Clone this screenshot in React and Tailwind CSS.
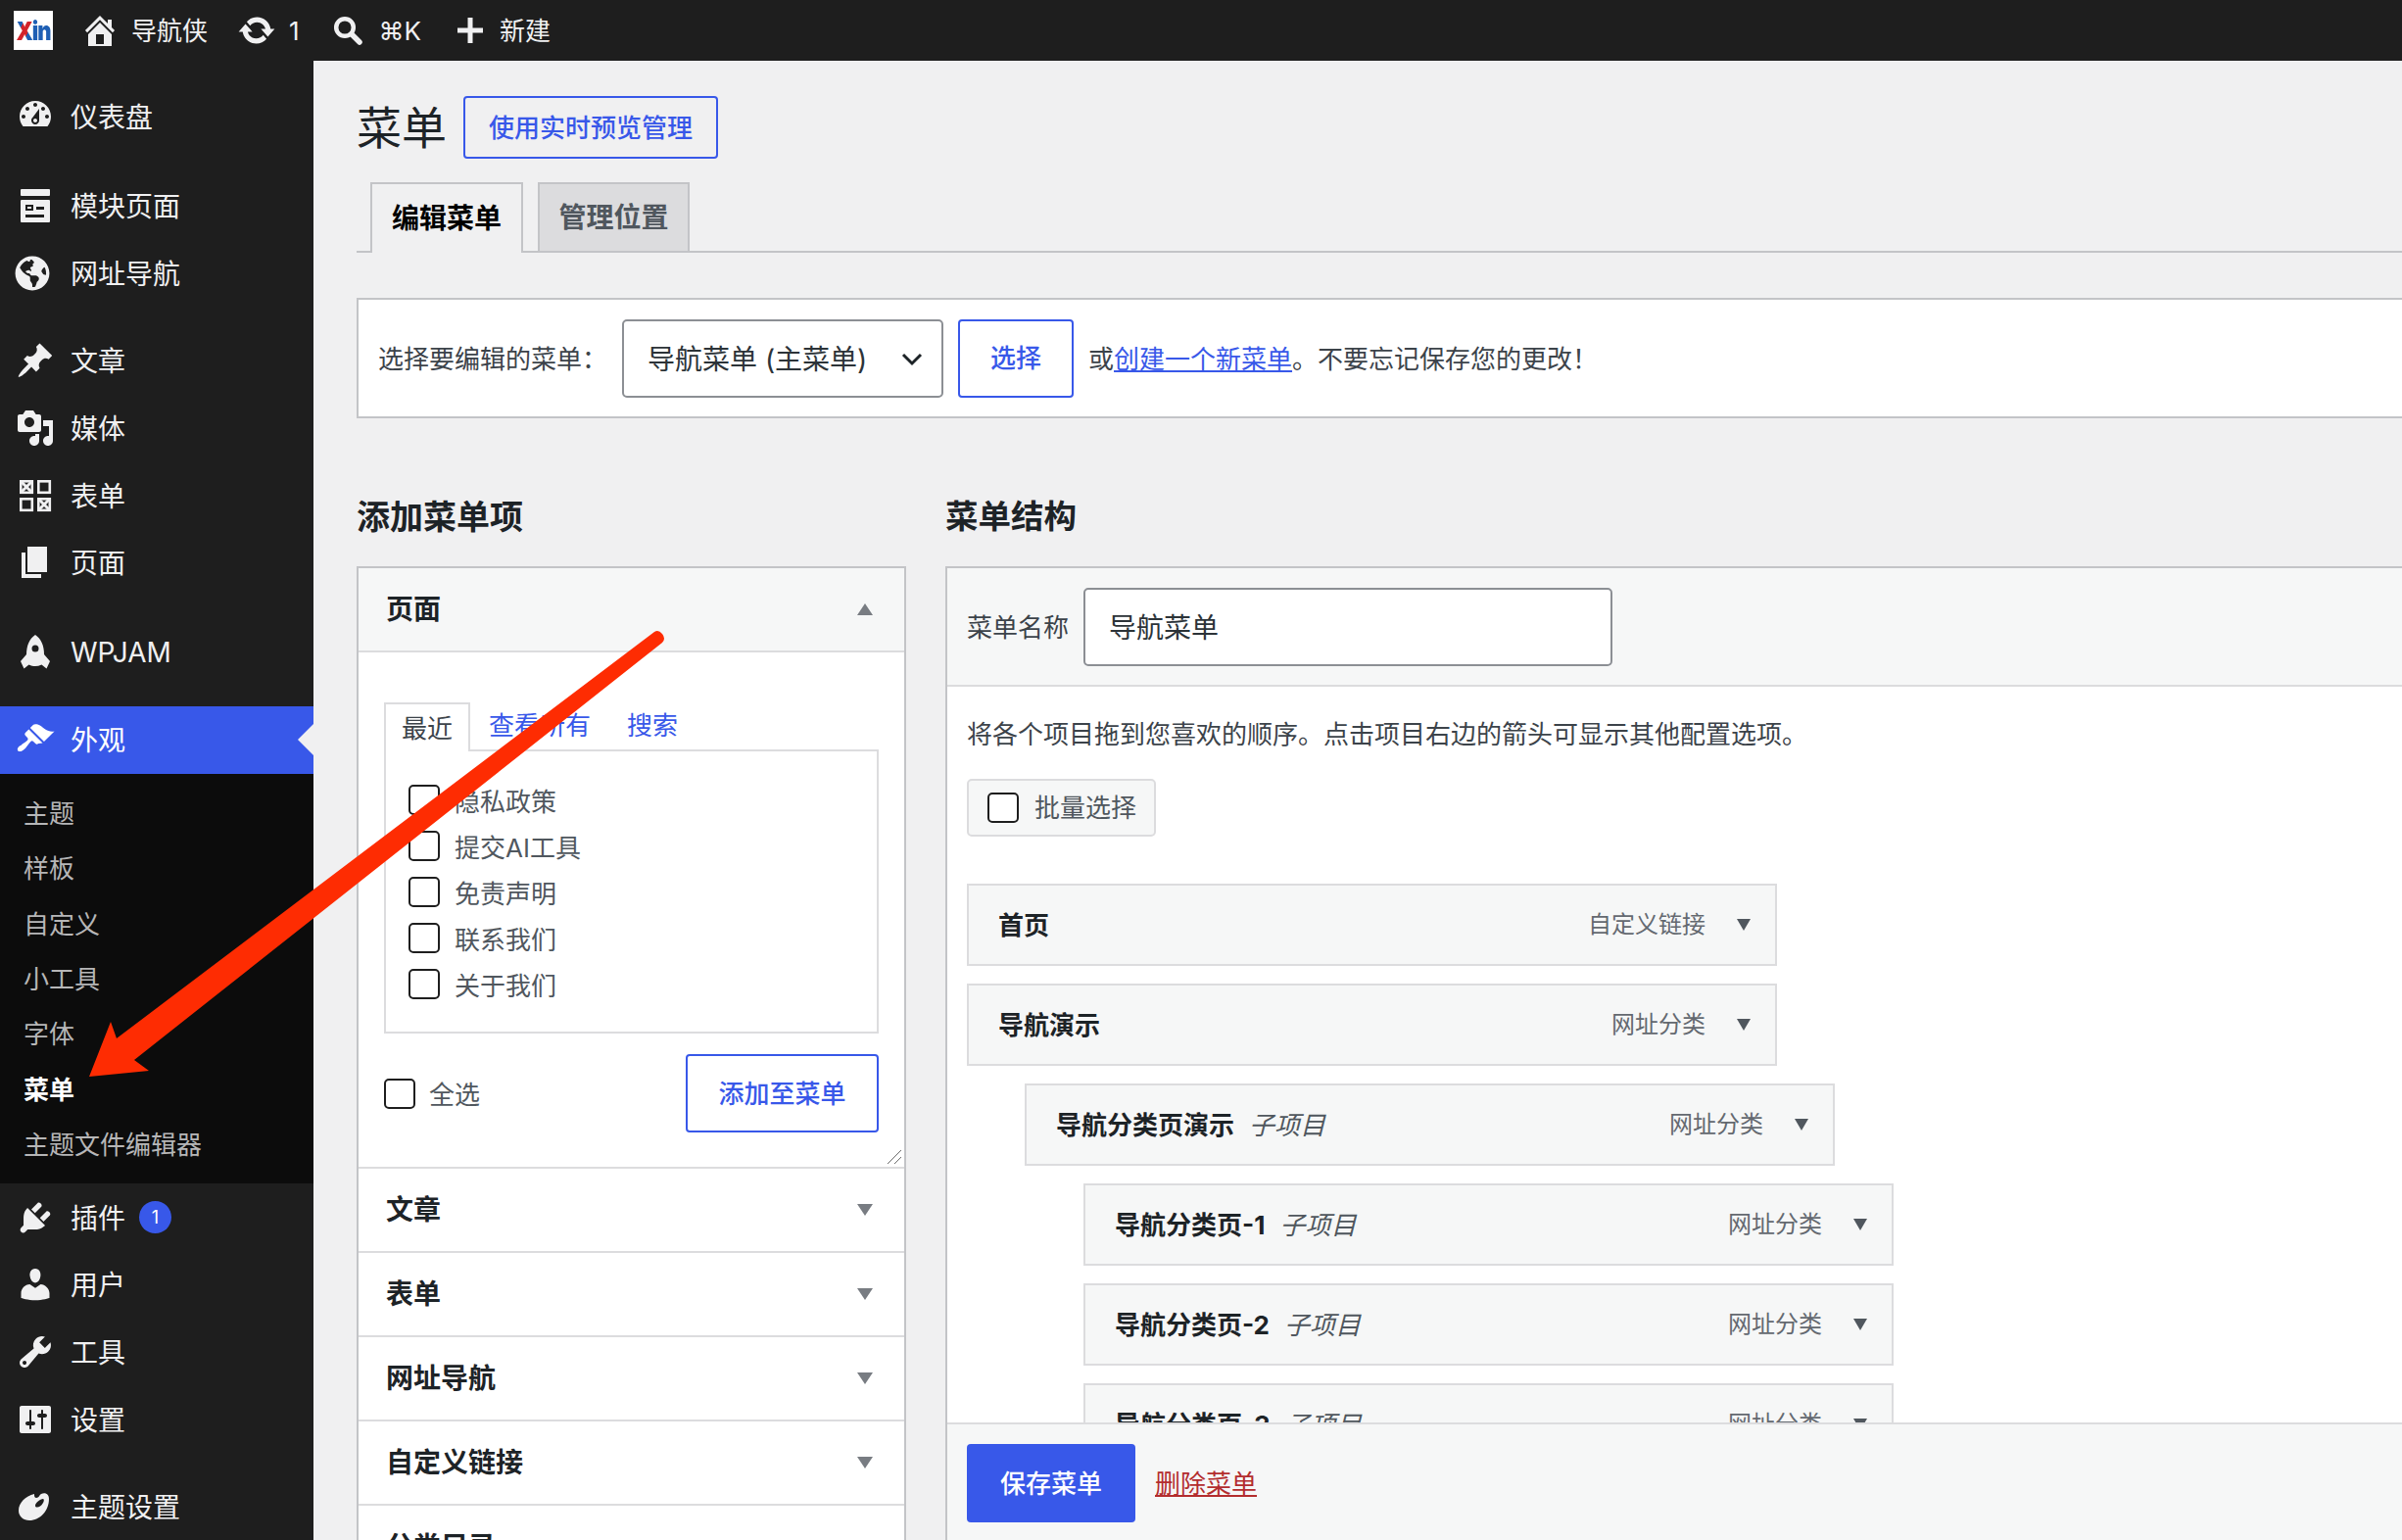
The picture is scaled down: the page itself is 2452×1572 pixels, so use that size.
import React from 'react';
import { FaGlobeAmericas } from 'react-icons/fa';

const P = {
  dashboard: 'M3.76 16h12.48c1.1-1.37 1.76-3.11 1.76-5 0-4.42-3.58-8-8-8s-8 3.58-8 8c0 1.89.66 3.63 1.76 5zM10 4c.55 0 1 .45 1 1s-.45 1-1 1-1-.45-1-1 .45-1 1-1zM6 6c.55 0 1 .45 1 1s-.45 1-1 1-1-.45-1-1 .45-1 1-1zm8 0c.55 0 1 .45 1 1s-.45 1-1 1-1-.45-1-1 .45-1 1-1zm-5.37 5.55L12 7v6c0 1.1-.9 2-2 2s-2-.9-2-2c0-.57.24-1.08.63-1.45zM4 10c.55 0 1 .45 1 1s-.45 1-1 1-1-.45-1-1 .45-1 1-1zm12 0c.55 0 1 .45 1 1s-.45 1-1 1-1-.45-1-1 .45-1 1-1zm-5 3c0-.55-.45-1-1-1s-1 .45-1 1 .45 1 1 1 1-.45 1-1z',
  post: 'M10.44 3.02l1.82-1.82 6.36 6.35-1.83 1.82c-1.05-.68-2.48-.57-3.41.36l-.75.75c-.92.93-1.04 2.35-.35 3.41l-1.83 1.82-2.41-2.41-2.8 2.79c-.42.42-3.38 2.71-3.8 2.29s1.86-3.39 2.28-3.81l2.79-2.79L4.1 9.36l1.83-1.82c1.05.69 2.48.57 3.4-.36l.75-.75c.93-.92 1.05-2.35.36-3.41z',
  media: 'M13 11V4c0-.55-.45-1-1-1h-1.67L9 1H5L3.67 3H2c-.55 0-1 .45-1 1v7c0 .55.45 1 1 1h10c.55 0 1-.45 1-1zM7 4.5c1.38 0 2.5 1.12 2.5 2.5S8.38 9.5 7 9.5 4.5 8.38 4.5 7 5.62 4.5 7 4.5zM14 6h5v10.5c0 1.38-1.12 2.5-2.5 2.5S14 17.88 14 16.5s1.12-2.5 2.5-2.5c.17 0 .34.02.5.05V9h-3V6zm-4 8.05V13h2v3.5c0 1.38-1.12 2.5-2.5 2.5S7 17.88 7 16.5 8.12 14 9.5 14c.17 0 .34.02.5.05z',
  page: 'M6 15V2h10v13H6zm-1 1h8v2H3V5h2v11z',
  brush: 'M14.48 11.06L7.41 3.99l1.5-1.5c.5-.56 2.3-.47 3.51.32 1.21.8 1.43 1.28 2.91 2.1 1.18.64 2.45 1.26 4.45.85zm-.71.71L6.7 4.7 4.93 6.47c-.39.39-.39 1.02 0 1.41l1.06 1.06c.39.39.39 1.03 0 1.42-.6.6-1.43 1.11-2.21 1.69-.35.26-.7.53-1.01.84C1.43 13.23.4 14.98 1.2 15.78c.8.79 2.55-.23 3.91-1.59.31-.31.58-.66.85-1.01.58-.78 1.09-1.61 1.69-2.21.39-.39 1.02-.39 1.41 0l1.06 1.06c.39.39 1.02.39 1.41 0z',
  plugin: 'M13.11 4.36L9.87 7.6 8 5.73l3.24-3.24c.35-.34 1.05-.2 1.56.32.52.51.66 1.21.31 1.55zm-8 1.77l.91-1.12 9.01 9.01-1.19.84c-.71.71-2.63 1.16-3.82 1.16H6.14L4.9 17.26c-.59.59-1.54.59-2.12 0-.59-.58-.59-1.53 0-2.12l1.24-1.24v-3.88c0-1.13.4-3.19 1.09-3.89zm7.26 3.97l3.24-3.24c.34-.35 1.04-.21 1.55.31.52.51.66 1.21.31 1.55l-3.24 3.25z',
  users: 'M10 9.25c-2.27 0-2.73-3.44-2.73-3.44C7 4.02 7.82 2 9.97 2c2.16 0 2.98 2.02 2.71 3.81 0 0-.41 3.44-2.68 3.44zm0 2.57L12.72 10c2.39 0 4.52 2.33 4.52 4.53v2.49s-3.65 1.13-7.24 1.13c-3.65 0-7.24-1.13-7.24-1.13v-2.49c0-2.25 1.94-4.48 4.47-4.48z',
  tools: 'M16.68 9.77c-1.34 1.34-3.3 1.67-4.95.99l-5.41 6.52c-.99.99-2.59.99-3.58 0s-.99-2.59 0-3.57l6.52-5.42c-.68-1.65-.35-3.61.99-4.95 1.28-1.28 3.12-1.62 4.72-1.06l-2.89 2.89 2.82 2.82 2.86-2.87c.53 1.58.18 3.39-1.08 4.65zM3.81 16.21c.4.39 1.04.39 1.43 0 .4-.4.4-1.04 0-1.43-.39-.4-1.03-.4-1.43 0-.39.39-.39 1.03 0 1.43z',
  settings: 'M18 16V4c0-.55-.45-1-1-1H3c-.55 0-1 .45-1 1v12c0 .55.45 1 1 1h14c.55 0 1-.45 1-1zM8 11h1c.55 0 1 .45 1 1s-.45 1-1 1H8v1.5c0 .28-.22.5-.5.5s-.5-.22-.5-.5V13H6c-.55 0-1-.45-1-1s.45-1 1-1h1V5.5c0-.28.22-.5.5-.5s.5.22.5.5V11zm5-2h-1c-.55 0-1-.45-1-1s.45-1 1-1h1V5.5c0-.28.22-.5.5-.5s.5.22.5.5V7h1c.55 0 1 .45 1 1s-.45 1-1 1h-1v5.5c0 .28-.22.5-.5.5s-.5-.22-.5-.5V9z',
  home: 'M16 8.5l1.53 1.53-1.06 1.06L10 4.62l-6.47 6.47-1.06-1.06L10 2.5l4 4v-2h2v4zm-6-2.46l6 5.99V18H4v-5.97zM12 17v-5H8v5h4z',
  update: 'M10.2 3.28c3.53 0 6.43 2.61 6.92 6h2.08l-3.5 4-3.5-4h2.32c-.45-1.97-2.21-3.45-4.32-3.45-1.45 0-2.73.71-3.54 1.78L4.95 5.66C6.23 4.2 8.11 3.28 10.2 3.28zm-.4 13.44c-3.52 0-6.43-2.61-6.92-6H.8l3.5-4c1.17 1.33 2.33 2.67 3.5 4H5.48c.45 1.97 2.21 3.45 4.32 3.45 1.45 0 2.73-.71 3.54-1.78l1.71 1.95c-1.28 1.46-3.15 2.38-5.25 2.38z',
};

function Dash({ d, className = '' }) {
  return (
    <svg viewBox="0 0 20 20" className={`w-10 h-10 shrink-0 fill-[#f0f0f1] ${className}`}>
      <path d={d} />
    </svg>
  );
}

function LayoutIcon() {
  return (
    <svg viewBox="0 0 40 40" className="w-10 h-10 shrink-0 fill-[#f0f0f1]">
      <rect x="5" y="3" width="30" height="7" rx="1" />
      <path fillRule="evenodd" d="M6 14h28a1 1 0 0 1 1 1v21a1 1 0 0 1-1 1H6a1 1 0 0 1-1-1V15a1 1 0 0 1 1-1zM10 19v6h8v-6zM21 21v3h8v-3zM10 29v3h19v-3z" />
      <rect x="12" y="21" width="4" height="2" />
    </svg>
  );
}

function FormsIcon() {
  return (
    <svg viewBox="0 0 40 40" className="w-10 h-10 shrink-0">
      <g fill="none" stroke="#f0f0f1" strokeWidth="2.6">
        <rect x="5.3" y="5.3" width="11.5" height="11.5" />
        <rect x="23.3" y="5.3" width="11.5" height="11.5" />
        <rect x="5.3" y="23.3" width="11.5" height="11.5" />
        <rect x="23.3" y="23.3" width="11.5" height="11.5" />
        <path d="M6 6l10 10M16 6L6 16M24 24l10 10M34 24L24 34" strokeWidth="3" />
      </g>
    </svg>
  );
}

function RocketIcon() {
  return (
    <svg viewBox="0 0 40 40" className="w-10 h-10 shrink-0 fill-[#f0f0f1]">
      <path fillRule="evenodd" d="M20 3C26 7 29 14 29 23L35 30 31.5 37.500 26.500 33.500C22 35.500 18 35.500 13.500 33.500L8.500 37.500 5 30 11 23C11 14 14 7 20 3ZM20 13.500a3.500 3.500 0 1 0 0 7 3.500 3.500 0 0 0 0-7Z" />
    </svg>
  );
}

function PaletteIcon() {
  return (
    <svg viewBox="0 0 40 40" className="w-10 h-10 shrink-0 fill-[#f0f0f1]">
      <path fillRule="evenodd" d="M19 7C10 9 3 16 3 24C3 30 8 34 14 34C25 34 34 24 34 12C34 7 30 5 26 7C24 8 24 11 21 11C19 11 19 8 19 7ZM28 12C25 12 20 16 20 19C20 21 23 21 25 19.500C28 17.500 30 13 28 12Z" />
    </svg>
  );
}

function SearchIcon() {
  return (
    <svg viewBox="0 0 30 30" className="w-[30px] h-[30px] shrink-0" fill="none" stroke="#f0f0f1">
      <circle cx="12" cy="12" r="8.800" strokeWidth="4.500" />
      <path d="M19 19l8 8" strokeWidth="5.500" strokeLinecap="round" />
    </svg>
  );
}

function PlusIcon() {
  return (
    <svg viewBox="0 0 26 26" className="w-[26px] h-[26px] shrink-0 fill-[#f0f0f1]">
      <path d="M10.500 0h5v10.500H26v5H15.500V26h-5V15.500H0v-5h10.500z" />
    </svg>
  );
}

function Tri({ up, className = '' }) {
  return (
    <svg viewBox="0 0 16 12" className={`w-4 h-3 shrink-0 fill-[#787c82] ${className}`}>
      <path d={up ? 'M8 0l8 12H0z' : 'M0 0h16L8 12z'} />
    </svg>
  );
}

function Check({ className = '' }) {
  return <span className={`block w-[32px] h-[31px] shrink-0 bg-white border-2 border-[#1e1e1e] rounded-[5px] ${className}`} />;
}

function MenuRow({ icon, label, mt = '', badge, active }) {
  return (
    <div className={`relative flex items-center h-[68.6px] text-[28px] pl-4 ${mt} ${active ? 'bg-[#3858e9] text-white' : 'text-[#f0f0f1]'}`}>
      <span className="w-[56px] flex shrink-0">{icon}</span>
      <span className="pt-[2px]">{label}</span>
      {badge && (
        <span className="ml-[14px] w-[33px] h-[33px] rounded-full bg-[#3858e9] text-white text-[18px] flex items-center justify-center">{badge}</span>
      )}
      {active && (
        <span className="absolute right-0 top-1/2 -translate-y-1/2 w-0 h-0 border-y-[16px] border-y-transparent border-r-[16px] border-r-[#f0f0f1]" />
      )}
    </div>
  );
}

function Sidebar() {
  const subs = ['主题', '样板', '自定义', '小工具', '字体', '菜单', '主题文件编辑器'];
  return (
    <aside className="w-[320px] shrink-0 bg-[#1e1e1e] pt-[23px] overflow-hidden">
      <MenuRow icon={<Dash d={P.dashboard} className="-mt-1" />} label="仪表盘" />
      <MenuRow mt="mt-[22.400px]" icon={<LayoutIcon />} label="模块页面" />
      <MenuRow icon={<span className="w-10 h-10 -ml-[3px] flex items-center justify-center"><FaGlobeAmericas className="w-9 h-9 text-[#f0f0f1]" /></span>} label="网址导航" />
      <MenuRow mt="mt-[21px]" icon={<Dash d={P.post} />} label="文章" />
      <MenuRow icon={<Dash d={P.media} />} label="媒体" />
      <MenuRow icon={<FormsIcon />} label="表单" />
      <MenuRow icon={<Dash d={P.page} />} label="页面" />
      <MenuRow mt="mt-[22px]" icon={<RocketIcon />} label="WPJAM" />
      <MenuRow mt="mt-[22px]" active icon={<Dash d={P.brush} className="fill-white" />} label="外观" />
      <div className="bg-[#0c0c0c] pt-[12px] pb-[12px]">
        {subs.map((s) => (
          <div key={s} className={`h-[56.4px] flex items-center pl-[24px] pt-[1px] text-[26px] ${s === '菜单' ? 'text-white font-bold' : 'text-[#b6b6b7]'}`}>{s}</div>
        ))}
      </div>
      <MenuRow icon={<Dash d={P.plugin} />} label="插件" badge="1" />
      <MenuRow icon={<Dash d={P.users} />} label="用户" />
      <MenuRow icon={<Dash d={P.tools} />} label="工具" />
      <MenuRow icon={<Dash d={P.settings} />} label="设置" />
      <MenuRow mt="mt-[21px]" icon={<PaletteIcon />} label="主题设置" />
    </aside>
  );
}

function TopBar() {
  return (
    <header className="h-[62px] shrink-0 bg-[#1e1e1e] flex items-center text-[26px] text-[#f0f0f1] pl-[14px]">
      <span className="w-10 h-10 bg-white flex items-center justify-center">
        <span className="block text-[22px] leading-none font-black tracking-[-1px] text-[#1f5fb4] scale-y-[1.2]">
          <span className="bg-[linear-gradient(120deg,#1f5fb4_35%,#d2232a_36%,#d2232a_65%,#1f5fb4_66%)] bg-clip-text text-transparent">X</span>in
        </span>
      </span>
      <Dash d={P.home} className="ml-[28px]" />
      <span className="ml-[12px]">导航侠</span>
      <Dash d={P.update} className="ml-[30px]" />
      <span className="ml-[13px]">1</span>
      <span className="ml-[34px]"><SearchIcon /></span>
      <span className="ml-[17px]">⌘K</span>
      <span className="ml-[37px]"><PlusIcon /></span>
      <span className="ml-[17px]">新建</span>
    </header>
  );
}

function SideRow({ label }) {
  return (
    <div className="h-[86px] border-t-2 border-[#dcdcde] flex items-center justify-between pl-[28px] pr-[32px] bg-white">
      <span className="text-[28px] font-bold text-[#1d2327]">{label}</span>
      <Tri />
    </div>
  );
}

function LeftColumn() {
  const pages = ['隐私政策', '提交AI工具', '免责声明', '联系我们', '关于我们'];
  return (
    <section className="w-[561px] shrink-0">
      <div className="border-2 border-[#c3c4c7] bg-white">
        <div className="h-[86px] bg-[#f6f7f7] border-b-2 border-[#dcdcde] flex items-center justify-between pl-[28px] pr-[32px]">
          <span className="text-[28px] font-bold text-[#1d2327]">页面</span>
          <Tri up />
        </div>
        <div className="relative px-[26px] pt-[51px] pb-[35px]">
          <div className="flex items-center text-[26px] text-[#3858e9] h-[48px]">
            <span className="relative z-10 h-[50px] -mb-[2px] w-[88px] flex items-center justify-center bg-white border-2 border-b-0 border-[#dcdcde] text-[#3c434a]">最近</span>
            <span className="ml-[19px] -mt-[2px]">查看所有</span>
            <span className="ml-[37px] -mt-[2px]">搜索</span>
          </div>
          <div className="h-[290px] border-2 border-[#dcdcde] pt-[26px] pl-[23px]">
            {pages.map((p) => (
              <div key={p} className="h-[47px] flex items-center text-[26px] text-[#50575e]">
                <Check />
                <span className="ml-[15px] pt-[4px]">{p}</span>
              </div>
            ))}
          </div>
          <div className="mt-[21px] flex items-center justify-between">
            <div className="flex items-center text-[26px] text-[#50575e]">
              <Check />
              <span className="ml-[14px] pt-[2px]">全选</span>
            </div>
            <button className="w-[197px] h-[80px] border-2 border-[#3858e9] rounded-[4px] bg-white text-[26px] font-medium text-[#3858e9]">添加至菜单</button>
          </div>
          <svg viewBox="0 0 16 16" className="absolute right-[2px] bottom-[2px] w-4 h-4" fill="none" stroke="#6b6b6b" strokeWidth="1">
            <path d="M1 15L15 1M8 15l7-7" />
          </svg>
        </div>
        <SideRow label="文章" />
        <SideRow label="表单" />
        <SideRow label="网址导航" />
        <SideRow label="自定义链接" />
        <SideRow label="分类目录" />
      </div>
    </section>
  );
}

function Item({ title, type, sub, indent = '' }) {
  return (
    <div className={`h-[84px] w-[827px] mb-[18px] shrink-0 border-2 border-[#dcdcde] bg-[#f6f7f7] flex items-center pl-[30px] pr-[24px] ${indent}`}>
      <span className="text-[26px] font-bold text-[#1d2327]">{title}</span>
      {sub && <span className="ml-[15px] text-[26px] italic text-[#50575e]">子项目</span>}
      <span className="ml-auto text-[24px] text-[#646970]">{type}</span>
      <span className="ml-[32px] flex w-[15px]"><svg viewBox="0 0 14 12" className="w-[14px] h-[12px] fill-[#50575e]"><path d="M0 0h14L7 12z" /></svg></span>
    </div>
  );
}

function RightColumn() {
  return (
    <section className="flex-1 min-w-0 h-[994px] flex flex-col border-2 border-r-0 border-[#c3c4c7] border-b-0 bg-white">
      <div className="h-[121px] shrink-0 bg-[#f6f7f7] border-b-2 border-[#dcdcde] flex items-center pl-[20px]">
        <span className="text-[26px] text-[#3c434a] pt-[2px]">菜单名称</span>
        <div className="ml-[15px] w-[540px] h-[80px] bg-white border-2 border-[#8c8f94] rounded-[5px] flex items-center pl-[24px] pt-[2px] text-[28px] text-[#2c3338]">导航菜单</div>
      </div>
      <div className="flex-1 min-h-0 overflow-hidden pl-[20px] pt-[30px]">
        <p className="h-[36px] flex items-center text-[26px] text-[#3c434a]">将各个项目拖到您喜欢的顺序。点击项目右边的箭头可显示其他配置选项。</p>
        <div className="mt-[28px] w-[193px] h-[59px] bg-[#f6f7f7] border-2 border-[#dcdcde] rounded-[5px] flex items-center pl-[19px] text-[26px] text-[#50575e]">
          <Check />
          <span className="ml-[16px]">批量选择</span>
        </div>
        <div className="mt-[48px] flex flex-col">
          <Item title="首页" type="自定义链接" />
          <Item title="导航演示" type="网址分类" />
          <Item title="导航分类页演示" type="网址分类" sub indent="ml-[59px]" />
          <Item title="导航分类页-1" type="网址分类" sub indent="ml-[119px]" />
          <Item title="导航分类页-2" type="网址分类" sub indent="ml-[119px]" />
          <Item title="导航分类页-3" type="网址分类" sub indent="ml-[119px]" />
        </div>
      </div>
      <div className="h-[120px] shrink-0 bg-[#f6f7f7] border-t-2 border-[#dcdcde] flex items-start pl-[20px] pt-[20px]">
        <button className="w-[172px] h-[80px] bg-[#3858e9] rounded-[4px] text-white text-[26px] font-medium">保存菜单</button>
        <span className="ml-[20px] h-[80px] flex items-center text-[26px] text-[#b32d2e] underline">删除菜单</span>
      </div>
    </section>
  );
}

function Main() {
  return (
    <main className="flex-1 min-w-0 bg-[#f0f0f1] pl-[44px] pt-[36px] overflow-hidden">
      <div className="flex items-center h-[64px]">
        <h1 className="text-[46px] text-[#1d2327] leading-none">菜单</h1>
        <button className="ml-[17px] w-[260px] h-[64px] border-2 border-[#3858e9] rounded-[4px] text-[26px] font-medium text-[#3858e9]">使用实时预览管理</button>
      </div>
      <div className="mt-[24px] h-[72px] border-b-2 border-[#c3c4c7] flex items-end pl-[14px] text-[28px] font-bold">
        <span className="relative w-[156px] h-[72px] -mb-[2px] border-2 border-b-0 border-[#c3c4c7] bg-[#f0f0f1] text-black flex items-center justify-center">编辑菜单</span>
        <span className="ml-[15px] w-[155px] h-[70px] border-2 border-b-0 border-[#c3c4c7] bg-[#dcdcde] text-[#50575e] flex items-center justify-center">管理位置</span>
      </div>
      <div className="mt-[46px] h-[123px] bg-white border-2 border-r-0 border-[#c3c4c7] flex items-center pl-[20px] text-[26px] text-[#3c434a]">
        <span className="pt-[2px]">选择要编辑的菜单：</span>
        <div className="ml-[15px] w-[328px] h-[80px] border-2 border-[#8c8f94] rounded-[5px] flex items-center justify-between pl-[24px] pr-[18px] text-[28px] text-[#2c3338] bg-white">
          <span className="pt-[2px]">导航菜单 (主菜单)</span>
          <svg viewBox="0 0 24 24" className="w-6 h-6" fill="none" stroke="#1d2327" strokeWidth="3"><path d="M3 8l9 9 9-9" /></svg>
        </div>
        <button className="ml-[15px] w-[118px] h-[80px] border-2 border-[#3858e9] rounded-[4px] font-medium text-[#3858e9]">选择</button>
        <span className="ml-[15px] pt-[2px]">或<span className="text-[#3858e9] underline">创建一个新菜单</span>。不要忘记保存您的更改！</span>
      </div>
      <div className="mt-[75px] flex gap-[40px]">
        <h2 className="w-[561px] h-[50px] flex items-center text-[34px] font-bold text-[#1d2327]">添加菜单项</h2>
        <h2 className="h-[50px] flex items-center text-[33.500px] font-bold text-[#1d2327]">菜单结构</h2>
      </div>
      <div className="mt-[26px] flex gap-[40px] items-start">
        <LeftColumn />
        <RightColumn />
      </div>
    </main>
  );
}

export default function App() {
  return (
    <div className="relative w-[2452px] h-[1572px] overflow-hidden flex flex-col bg-[#f0f0f1] [font-family:Inter,'Noto_Sans_CJK_SC',sans-serif]">
      <TopBar />
      <div className="flex flex-1 min-h-0">
        <Sidebar />
        <Main />
      </div>
      <svg viewBox="0 0 2452 1572" className="absolute inset-0 w-[2452px] h-[1572px] pointer-events-none">
        <path d="M91 1099L113 1043L119 1060L668 645Q672 642 676 647Q680 652 676 656L137 1082L152 1093Z" fill="#fe2c02" />
      </svg>
    </div>
  );
}
